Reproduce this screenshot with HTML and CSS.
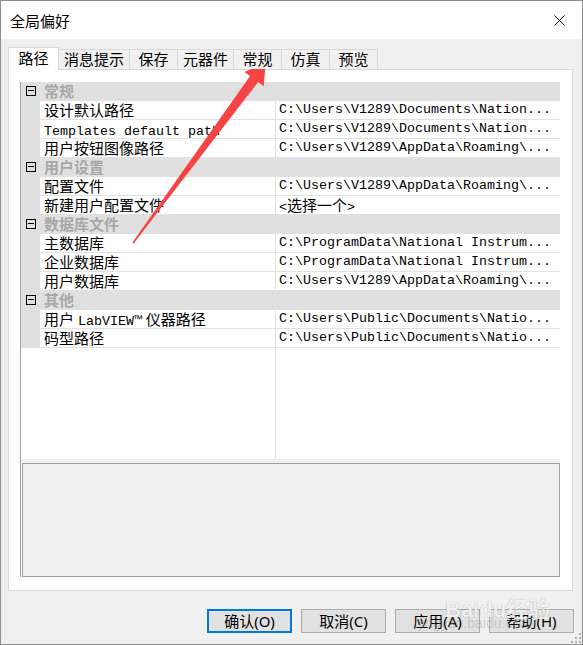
FILE: index.html
```html
<!DOCTYPE html>
<html lang="zh-CN">
<head>
    <meta charset="UTF-8">
    <meta name="viewport" content="width=device-width, initial-scale=1.0">
    <title>全局偏好</title>
    <link rel="stylesheet" href="styles.css">
</head>
<body>
    <div class="window">
        <!-- Title bar -->
        <div class="titlebar">
            <span class="title">全局偏好</span>
            <span class="close">
                <svg width="11" height="11" viewBox="0 0 11 11">
                    <path d="M0.5 0.5 L10.5 10.5 M10.5 0.5 L0.5 10.5" stroke="#000" stroke-width="1" fill="none"/>
                </svg>
            </span>
        </div>

        <div class="client">
            <!-- Tabs -->
            <div class="tabs">
                <div class="tab active">路径</div>
                <div class="tab">消息提示</div>
                <div class="tab">保存</div>
                <div class="tab">元器件</div>
                <div class="tab">常规</div>
                <div class="tab">仿真</div>
                <div class="tab">预览</div>
            </div>

            <div class="panel">
                <div class="grid">
                    <div class="rows">
                        <div class="row group"><span class="gutter"><i class="toggle"></i></span><span class="group-name">常规</span></div>
                        <div class="row"><span class="gutter"></span><span class="name">设计默认路径</span><span class="value">C:\Users\V1289\Documents\Nation...</span></div>
                        <div class="row"><span class="gutter"></span><span class="name"><span class="en">Templates default path</span></span><span class="value">C:\Users\V1289\Documents\Nation...</span></div>
                        <div class="row"><span class="gutter"></span><span class="name">用户按钮图像路径</span><span class="value">C:\Users\V1289\AppData\Roaming\...</span></div>

                        <div class="row group"><span class="gutter"><i class="toggle"></i></span><span class="group-name">用户设置</span></div>
                        <div class="row"><span class="gutter"></span><span class="name">配置文件</span><span class="value">C:\Users\V1289\AppData\Roaming\...</span></div>
                        <div class="row"><span class="gutter"></span><span class="name">新建用户配置文件</span><span class="value">&lt;<span class="zh">选择一个</span>&gt;</span></div>

                        <div class="row group"><span class="gutter"><i class="toggle"></i></span><span class="group-name">数据库文件</span></div>
                        <div class="row"><span class="gutter"></span><span class="name">主数据库</span><span class="value">C:\ProgramData\National Instrum...</span></div>
                        <div class="row"><span class="gutter"></span><span class="name">企业数据库</span><span class="value">C:\ProgramData\National Instrum...</span></div>
                        <div class="row"><span class="gutter"></span><span class="name">用户数据库</span><span class="value">C:\Users\V1289\AppData\Roaming\...</span></div>

                        <div class="row group"><span class="gutter"><i class="toggle"></i></span><span class="group-name">其他</span></div>
                        <div class="row"><span class="gutter"></span><span class="name">用户 <span class="en">LabVIEW™</span> 仪器路径</span><span class="value">C:\Users\Public\Documents\Natio...</span></div>
                        <div class="row"><span class="gutter"></span><span class="name">码型路径</span><span class="value">C:\Users\Public\Documents\Natio...</span></div>
                    </div>
                    <div class="filler"><span class="gutter"></span><span class="name"></span><span class="value"></span></div>
                    <div class="splitter"></div>
                    <div class="desc"></div>
                </div>
            </div>

            <!-- Dialog buttons -->
            <div class="buttons">
                <button class="btn default">确认(O)</button>
                <button class="btn">取消(C)</button>
                <button class="btn">应用(A)</button>
                <button class="btn">帮助(H)</button>
            </div>
        </div>

        <!-- annotation arrow -->
        <svg class="arrow" width="583" height="645" viewBox="0 0 583 645">
            <polygon points="132.4,242.6 250.1,76.1 244.5,72.0 265.7,62.7 263.7,86.2 258.1,82.1 133.6,243.4" fill="#f64444"/>
        </svg>

        <div class="watermark">Bai<span class="paw">du</span>经验</div>
        <div class="watermark-url">jingyan.baidu.com</div>

        <svg class="grip" width="10" height="10" viewBox="0 0 10 10">
            <rect x="8" y="0" width="2" height="2" fill="#b0b0b0"/>
            <rect x="4" y="4" width="2" height="2" fill="#b0b0b0"/>
            <rect x="8" y="4" width="2" height="2" fill="#b0b0b0"/>
            <rect x="0" y="8" width="2" height="2" fill="#b0b0b0"/>
            <rect x="4" y="8" width="2" height="2" fill="#b0b0b0"/>
            <rect x="8" y="8" width="2" height="2" fill="#b0b0b0"/>
        </svg>
    </div>
</body>
</html>
```

FILE: styles.css
```css
/* General Styles */
* {
    box-sizing: border-box;
}

body {
    margin: 0;
    font-family: "Noto Sans", "Noto Sans CJK SC", sans-serif;
    background-color: #fff;
    color: #000;
}

.window {
    position: relative;
    width: 583px;
    height: 645px;
    border: 1px solid #8c8c8c;
    background-color: #f0f0f0;
    display: flex;
    flex-direction: column;
    overflow: hidden;
}

/* Title bar */
.titlebar {
    height: 38px;
    background-color: #fff;
    display: flex;
    align-items: center;
    justify-content: space-between;
    padding-left: 9px;
}

.title {
    font-size: 15px;
}

.close {
    width: 45px;
    height: 38px;
    display: flex;
    align-items: center;
    justify-content: center;
}

.client {
    flex: 1;
    padding: 8px 9px 0 7px;
    display: flex;
    flex-direction: column;
}

/* Tabs */
.tabs {
    display: flex;
    align-items: flex-end;
    height: 23px;
    margin-bottom: -1px;
    position: relative;
    z-index: 1;
}

.tab {
    height: 20px;
    margin-bottom: 1px;
    min-width: 48px;
    padding: 0 5px;
    border: 1px solid #d9d9d9;
    border-left: none;
    border-bottom: none;
    background-color: #f0f0f0;
    font-size: 15px;
    line-height: 18px;
    text-align: center;
}

.tab.active {
    height: 23px;
    margin-bottom: 0;
    min-width: 51px;
    padding-top: 1px;
    border-left: 1px solid #d9d9d9;
    background-color: #fff;
}

/* Panel */
.panel {
    height: 522px;
    background-color: #fff;
    border: 1px solid #d9d9d9;
    padding: 12px 12px 13px 11px;
}

.grid {
    height: 100%;
    border-left: 1px solid #a0a0a0;
    display: flex;
    flex-direction: column;
}

.row,
.filler {
    display: grid;
    grid-template-columns: 19px 236px 1fr;
}

.row {
    height: 19px;
    border-bottom: 1px solid #e0e0e0;
    font-size: 15px;
    line-height: 18px;
    white-space: nowrap;
}

.gutter {
    background-color: #e0e0e0;
    display: flex;
    align-items: center;
}

.name {
    padding-left: 4px;
    border-right: 1px solid #e0e0e0;
}

.value {
    padding-left: 3px;
    font-family: "Liberation Mono", "Noto Sans CJK SC", monospace;
    font-size: 13.33px;
    line-height: 18px;
}

.en {
    font-family: "Liberation Mono", monospace;
    font-size: 13.33px;
}

.zh {
    font-family: "Noto Sans CJK SC", sans-serif;
    font-size: 15px;
}

.row.group {
    background-color: #e0e0e0;
}

.group-name {
    grid-column: span 2;
    padding-left: 4px;
    font-weight: bold;
    color: #a8a8a8;
}

.toggle {
    position: relative;
    display: block;
    width: 10px;
    height: 10px;
    margin-left: 5px;
    border: 1px solid #000;
}

.toggle::after {
    content: "";
    position: absolute;
    left: 1px;
    right: 1px;
    top: 3px;
    height: 1px;
    background-color: #000;
}

.filler {
    flex: 1;
}

.filler .gutter {
    background-color: #fff;
}

.splitter {
    height: 4px;
    background-color: #f0f0f0;
}

.desc {
    height: 114px;
    margin-left: 1px;
    border: 1px solid #a0a0a0;
    background-color: #f0f0f0;
}

/* Buttons */
.buttons {
    display: flex;
    justify-content: flex-end;
    gap: 9px;
    margin-top: 18px;
    margin-right: -1px;
}

.btn {
    width: 85px;
    height: 24px;
    padding: 0;
    border: 1px solid #adadad;
    background-color: #e1e1e1;
    font-family: "Noto Sans", "Noto Sans CJK SC", sans-serif;
    font-size: 15px;
    line-height: 20px;
    color: #000;
}

.btn.default {
    border: 2px solid #0078d7;
}

/* Overlays */
.arrow {
    position: absolute;
    left: -1px;
    top: -1px;
    pointer-events: none;
}

.watermark {
    position: absolute;
    left: 444px;
    top: 590px;
    font-family: "Liberation Sans", "Noto Sans CJK SC", sans-serif;
    font-size: 22px;
    font-weight: bold;
    color: rgba(255, 255, 255, 0.85);
    text-shadow: 0 0 1px rgba(0, 0, 0, 0.35);
    pointer-events: none;
}

.watermark-url {
    position: absolute;
    left: 418px;
    top: 614px;
    font-family: "Liberation Sans", sans-serif;
    font-size: 14px;
    color: rgba(140, 140, 140, 0.35);
    pointer-events: none;
}

.grip {
    position: absolute;
    right: 1px;
    bottom: 1px;
}
```
